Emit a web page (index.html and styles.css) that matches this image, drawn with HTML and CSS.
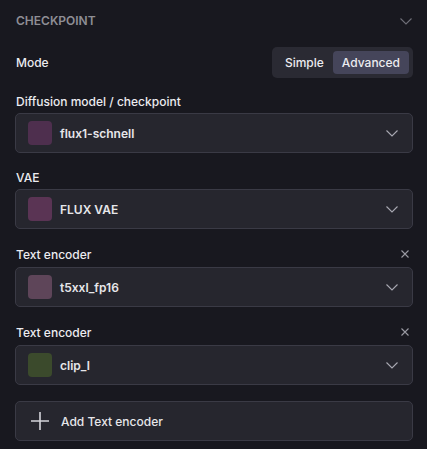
FILE: index.html
```html
<!DOCTYPE html>
<html lang="en">
<head>
<meta charset="utf-8">
<title>Checkpoint</title>
<link rel="stylesheet" href="styles.css">
</head>
<body>
<section class="panel">
  <div class="panel-header">
    <span class="panel-title">CHECKPOINT</span>
    <svg class="header-chevron" width="12" height="7" viewBox="0 0 12 7"><path d="M0.5 0.5 L6 6 L11.5 0.5" fill="none" stroke="#6f6f78" stroke-width="1.1"/></svg>
  </div>

  <div class="mode-row">
    <span class="row-label">Mode</span>
    <div class="toggle">
      <span class="toggle-btn">Simple</span>
      <span class="toggle-btn active">Advanced</span>
    </div>
  </div>

  <div class="field">
    <div class="field-label-row"><span class="row-label">Diffusion model / checkpoint</span></div>
    <div class="select">
      <span class="swatch swatch-flux"></span>
      <span class="select-value">flux1-schnell</span>
      <svg class="chevron" width="12" height="7" viewBox="0 0 12 7"><path d="M0.5 0.5 L6 6 L11.5 0.5" fill="none" stroke="#a9a9b2" stroke-width="1.1"/></svg>
    </div>
  </div>

  <div class="field">
    <div class="field-label-row"><span class="row-label">VAE</span></div>
    <div class="select">
      <span class="swatch swatch-vae"></span>
      <span class="select-value">FLUX VAE</span>
      <svg class="chevron" width="12" height="7" viewBox="0 0 12 7"><path d="M0.5 0.5 L6 6 L11.5 0.5" fill="none" stroke="#a9a9b2" stroke-width="1.1"/></svg>
    </div>
  </div>

  <div class="field">
    <div class="field-label-row removable"><span class="row-label">Text encoder</span>
      <svg class="close" width="8" height="8" viewBox="0 0 8 8"><path d="M0.5 0.5 L7.5 7.5 M7.5 0.5 L0.5 7.5" fill="none" stroke="#9a9aa3" stroke-width="1.1"/></svg>
    </div>
    <div class="select">
      <span class="swatch swatch-t5"></span>
      <span class="select-value">t5xxl_fp16</span>
      <svg class="chevron" width="12" height="7" viewBox="0 0 12 7"><path d="M0.5 0.5 L6 6 L11.5 0.5" fill="none" stroke="#a9a9b2" stroke-width="1.1"/></svg>
    </div>
  </div>

  <div class="field">
    <div class="field-label-row removable"><span class="row-label">Text encoder</span>
      <svg class="close" width="8" height="8" viewBox="0 0 8 8"><path d="M0.5 0.5 L7.5 7.5 M7.5 0.5 L0.5 7.5" fill="none" stroke="#9a9aa3" stroke-width="1.1"/></svg>
    </div>
    <div class="select">
      <span class="swatch swatch-clip"></span>
      <span class="select-value">clip_l</span>
      <svg class="chevron" width="12" height="7" viewBox="0 0 12 7"><path d="M0.5 0.5 L6 6 L11.5 0.5" fill="none" stroke="#a9a9b2" stroke-width="1.1"/></svg>
    </div>
  </div>

  <button class="add-btn" type="button">
    <svg class="plus" width="18" height="18" viewBox="0 0 18 18"><path d="M9 0 V18 M0 9 H18" fill="none" stroke="#d4d4da" stroke-width="1.6"/></svg>
    <span>Add Text encoder</span>
  </button>
</section>
</body>
</html>
```

FILE: styles.css
```css
html, body {
  margin: 0;
  padding: 0;
  background: #18181f;
}
body {
  font-family: Inter, "Noto Sans", "Liberation Sans", sans-serif;
  color: #ececf0;
  -webkit-font-smoothing: antialiased;
}
.panel {
  padding: 13px 14px 0 15px;
}
.panel-header {
  display: flex;
  justify-content: space-between;
  align-items: center;
  height: 16px;
  padding-left: 1px;
}
.panel-title {
  font-size: 12px;
  font-weight: 600;
  color: #8e8e95;
  line-height: 16px;
}
.header-chevron {
  margin-right: 1px;
}
.mode-row {
  display: flex;
  justify-content: space-between;
  align-items: center;
  margin-top: 18px;
  padding-left: 1px;
}
.row-label {
  font-size: 12px;
  font-weight: 500;
  line-height: 16px;
  color: #ececf0;
}
.toggle {
  display: flex;
  gap: 0;
  padding: 4px;
  background: #2a2a33;
  border-radius: 5px;
}
.toggle-btn {
  padding: 0 9px;
  height: 23px;
  line-height: 23px;
  font-size: 12px;
  font-weight: 500;
  color: #ececf0;
  border-radius: 4px;
}
.toggle-btn.active {
  background: #45455a;
}
.field {
  margin-top: 16px;
}
.field + .field {
  margin-top: 17px;
}
.field-label-row {
  display: flex;
  justify-content: space-between;
  align-items: center;
  height: 16px;
  padding-left: 1px;
  margin-bottom: 3px;
}
.field-label-row.removable {
  height: 18px;
  align-items: flex-start;
}
.field-label-row.removable .row-label {
  margin-top: 1px;
}
.close {
  margin-top: 4px;
  margin-right: 4px;
}
.select {
  display: flex;
  align-items: center;
  height: 38px;
  padding: 0 14px 0 12px;
  background: #26262e;
  border: 1px solid #3a3a45;
  border-radius: 5px;
}
.swatch {
  width: 24px;
  height: 24px;
  border-radius: 4px;
  flex: none;
}
.swatch-flux { background: #4e2f4e; }
.swatch-vae { background: #5a3454; }
.swatch-t5 { background: #5e4559; }
.swatch-clip { background: #3b4a2c; }
.select-value {
  flex: 1;
  margin-left: 8px;
  font-size: 12px;
  font-weight: 600;
  color: #e6e6ea;
}
.chevron {
  flex: none;
}
.add-btn {
  display: flex;
  align-items: center;
  gap: 12px;
  width: 100%;
  height: 40px;
  margin-top: 16px;
  padding: 0 15px;
  background: #26262e;
  border: 1px solid #3a3a45;
  border-radius: 5px;
  font-family: inherit;
  font-size: 12px;
  font-weight: 500;
  color: #e6e6ea;
  text-align: left;
  cursor: pointer;
}
.plus {
  flex: none;
}
```
